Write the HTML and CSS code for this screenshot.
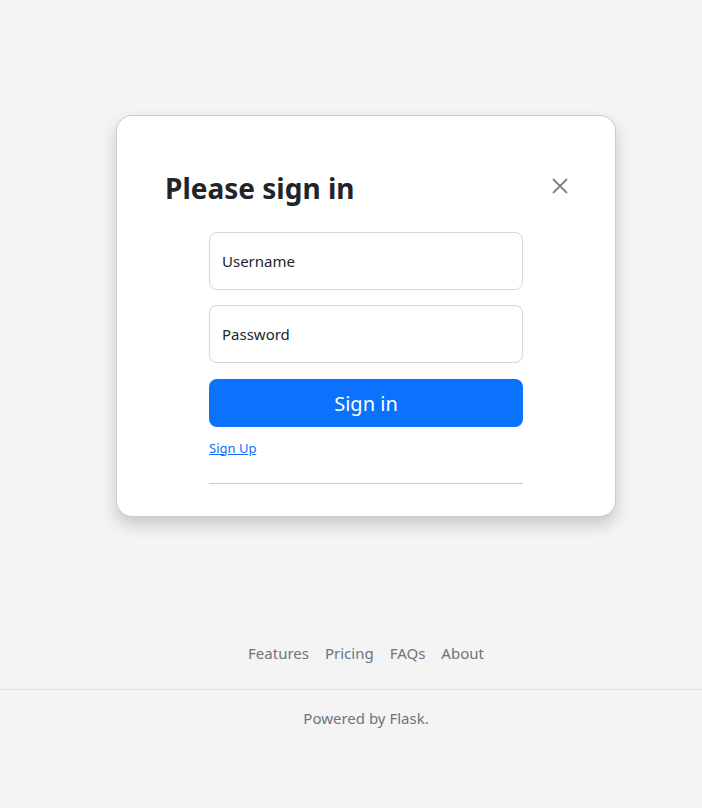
FILE: index.html
```html
<!DOCTYPE html>
<html lang="en">
<head>
<meta charset="utf-8">
<title>Please sign in</title>
<link rel="stylesheet" href="styles.css">
</head>
<body>
<main class="page">
  <div class="card">
    <div class="card-header">
      <h1 class="title">Please sign in</h1>
      <button class="close" type="button" aria-label="Close">
        <svg width="16" height="16" viewBox="0 0 16 16"><path d="M1 1L15 15M15 1L1 15" stroke="#808080" stroke-width="1.8" fill="none"/></svg>
      </button>
    </div>
    <div class="card-body">
      <form class="form">
        <div class="field"><span class="ph">Username</span></div>
        <div class="field"><span class="ph">Password</span></div>
        <button class="btn" type="button">Sign in</button>
        <a class="signup" href="#">Sign Up</a>
        <hr class="rule">
      </form>
    </div>
  </div>
</main>
<footer class="footer">
  <nav class="nav">
    <a href="#">Features</a>
    <a href="#">Pricing</a>
    <a href="#">FAQs</a>
    <a href="#">About</a>
  </nav>
  <p class="powered">Powered by Flask.</p>
</footer>
</body>
</html>
```

FILE: styles.css
```css
* { box-sizing: border-box; }
html, body { margin: 0; padding: 0; }
body {
  background: #f4f4f4;
  font-family: "Noto Sans", "Open Sans", sans-serif;
  color: #212529;
  font-size: 16px;
}
.page {
  padding: 115px 0 0 30px;
}
.card {
  width: 500px;
  margin: 0 auto;
  background: #fff;
  border: 1px solid rgba(0,0,0,.2);
  border-radius: 16px;
  box-shadow: 0 8px 16px rgba(0,0,0,.18);
}
.card-header {
  display: flex;
  align-items: center;
  justify-content: space-between;
  padding: 56px 47px 26px 48px;
}
.title {
  margin: 0;
  font-size: 28px;
  font-weight: 700;
  line-height: 1.2;
  letter-spacing: 0;
}
.close {
  width: 16px;
  height: 16px;
  padding: 0;
  margin-top: -6px;
  border: 0;
  background: none;
  display: block;
  line-height: 0;
}
.card-body {
  padding: 0 48px 32px;
}
.form {
  width: 314px;
  margin: 0 auto;
  display: flex;
  flex-direction: column;
}
.field {
  height: 58px;
  border: 1px solid #d3d6da;
  border-radius: 8px;
  padding: 0 12px;
  display: flex;
  align-items: center;
  margin-bottom: 15px;
  font-size: 15px;
}
.ph { color: #212529; }
.btn {
  height: 48px;
  margin-top: 1px;
  padding-top: 3px;
  border: 0;
  border-radius: 8px;
  background: #0a72fd;
  color: #fff;
  font-family: inherit;
  font-size: 20px;
  line-height: 1.5;
}
.signup {
  margin-top: 12px;
  align-self: flex-start;
  font-size: 13px;
  color: #0d6efd;
  text-decoration: underline;
  line-height: 1.5;
}
.rule {
  width: 100%;
  margin: 25px 0 0;
  border: 0;
  border-top: 1px solid #cccccc;
}
.footer {
  margin-top: 116px;
}
.nav {
  display: flex;
  justify-content: center;
  padding: 0 0 16px 30px;
  border-bottom: 1px solid #e0e0e0;
}
.nav a {
  padding: 8px 8px;
  color: #6c757d;
  text-decoration: none;
  line-height: 24px;
  font-size: 15px;
}
.powered {
  margin: 16px 0 0;
  padding-left: 30px;
  text-align: center;
  color: #6c757d;
  line-height: 24px;
  font-size: 15px;
}
```
